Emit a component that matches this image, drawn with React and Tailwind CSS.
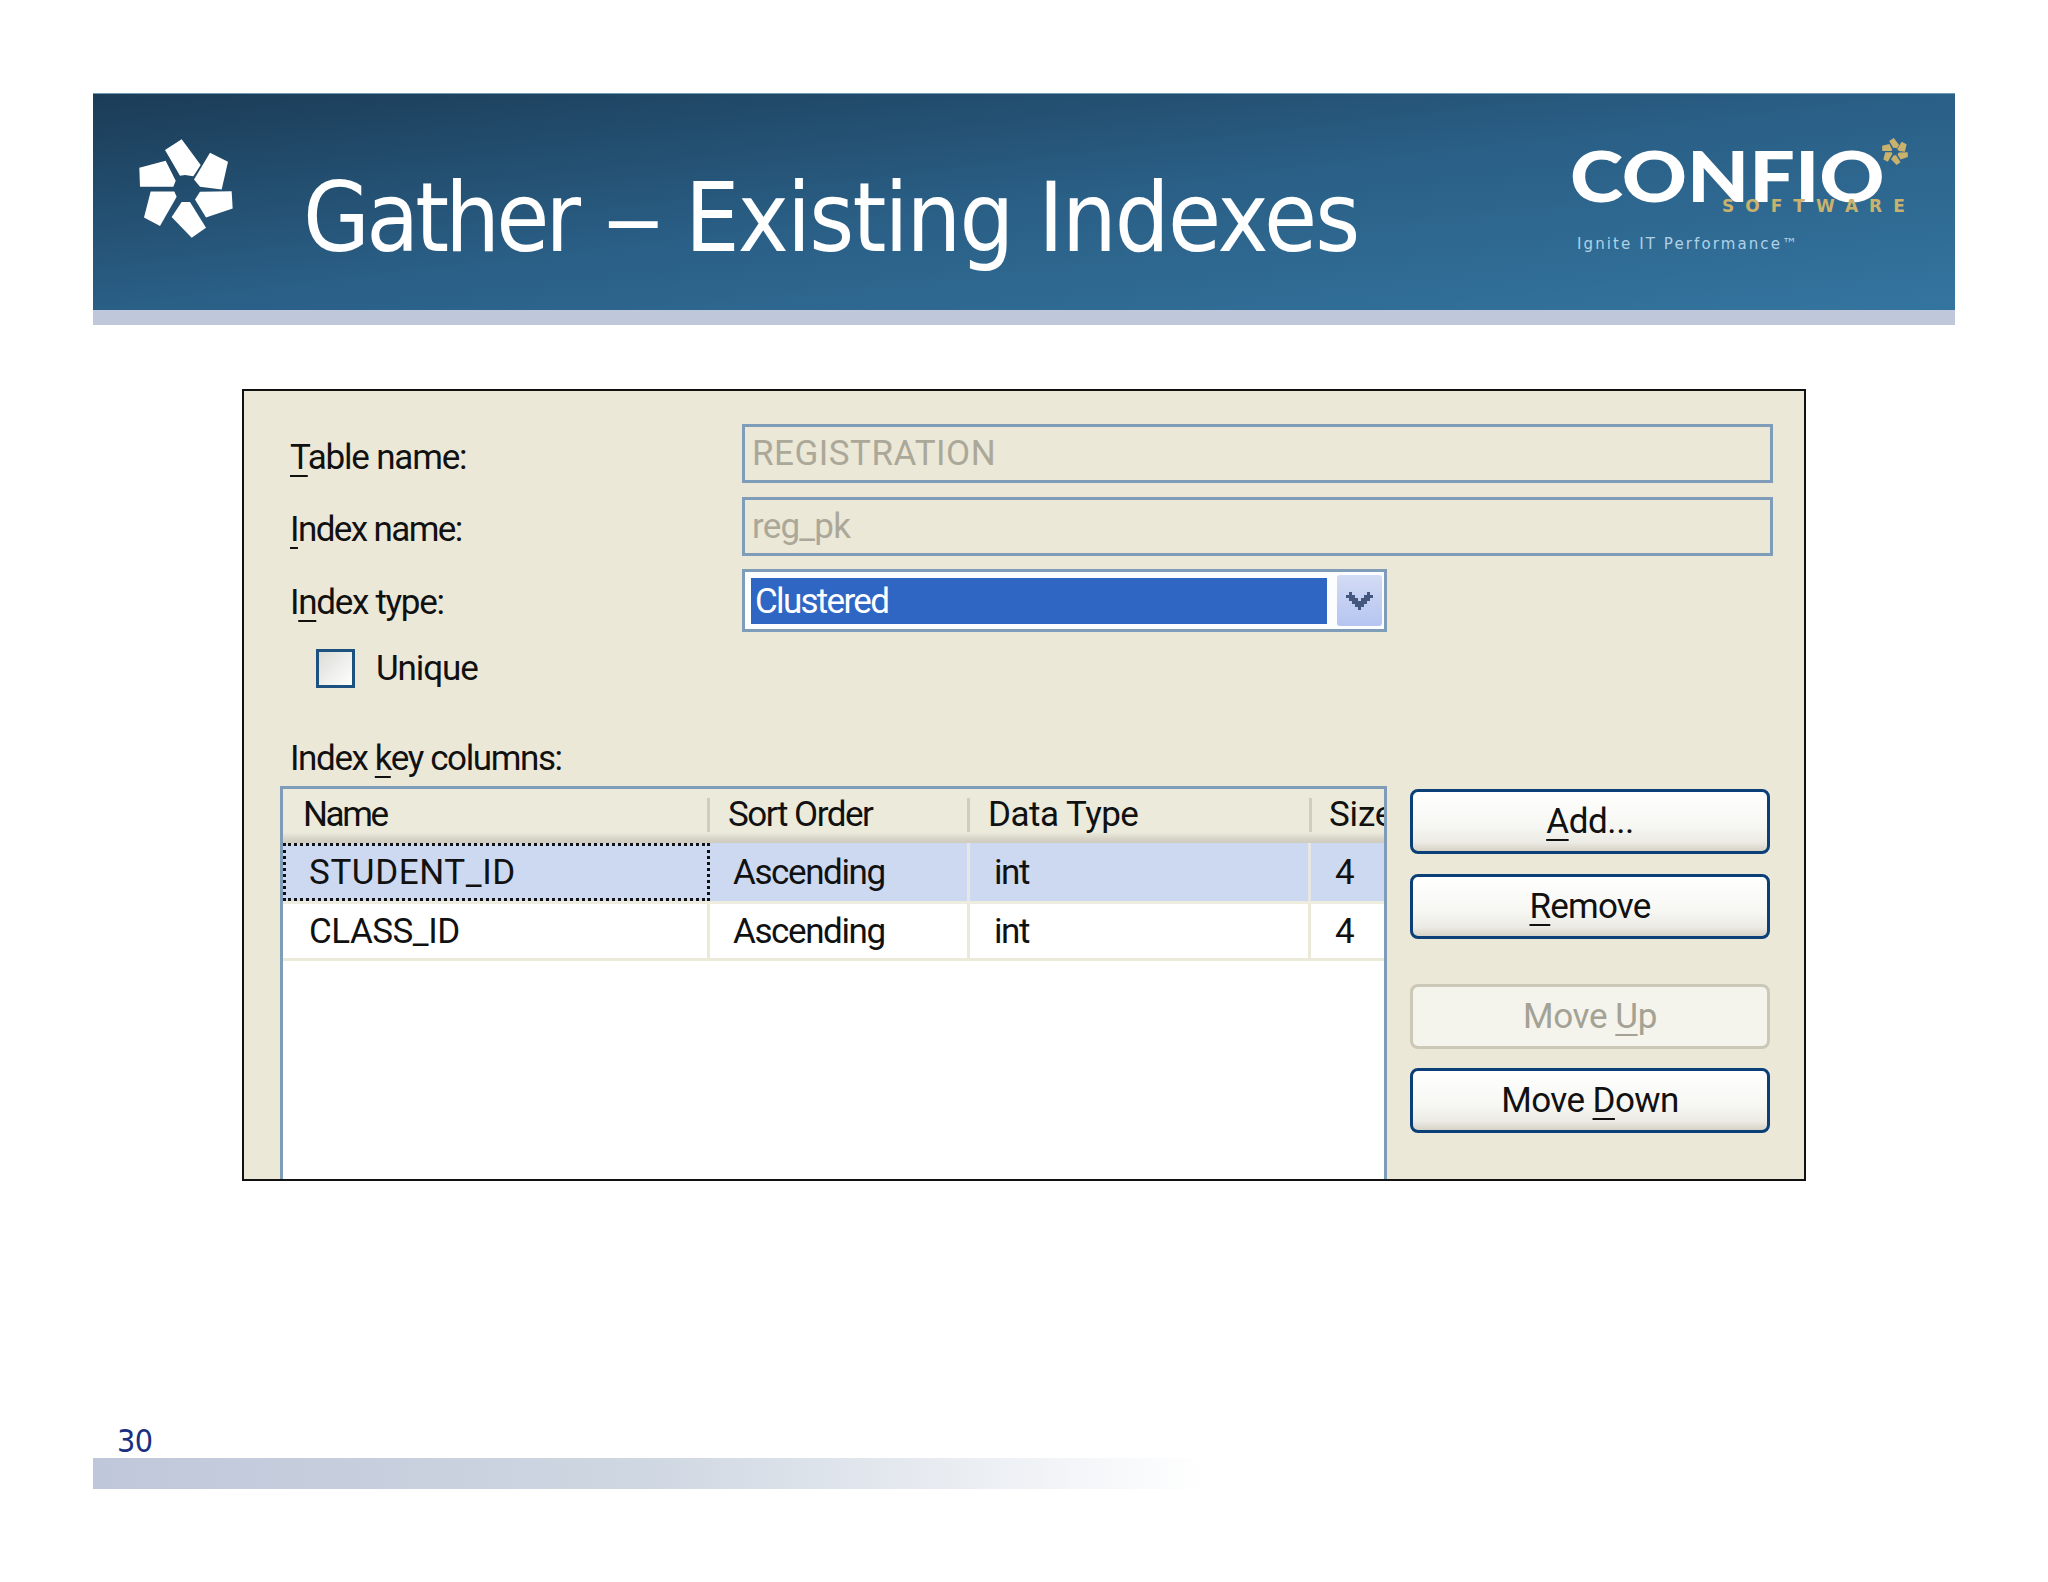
import React from 'react';

const ui = "font-['Roboto',Arial,sans-serif] text-[35px] leading-none text-[#111] font-normal";

const Petals = ({ className, fill }) => (
  <svg viewBox="27 27 282 296" preserveAspectRatio="none" className={className} fill={fill}>
    <polygon points="105,60 155,28 212,105 190,138 165,135 150,137" />
    <polygon points="240,68 294,95 275,178 210,170 192,148" />
    <polygon points="28,113 107,92 137,152 130,170 30,170" />
    <polygon points="62,184 133,184 140,200 90,287 42,262" />
    <polygon points="155,215 180,215 228,292 185,322 125,260" />
    <polygon points="195,208 210,185 305,183 308,235 228,262" />
  </svg>
);

const Mn = ({ children }) => (
  <span className="underline decoration-2 underline-offset-[6px]">{children}</span>
);

const FieldLabel = ({ children, className = '' }) => (
  <div className={`flex items-center ${ui} ${className}`}>{children}</div>
);

const ReadOnly = ({ children, tracking, height }) => (
  <div className={`flex items-center border-[3px] border-[#7f9db9] pl-[7px] text-[#aca899] ${height} ${tracking} font-['Roboto',Arial,sans-serif] text-[35px] leading-none`}>
    {children}
  </div>
);

const Button = ({ children, disabled, className = '' }) => (
  <button
    className={`flex h-[65px] w-[360px] items-center justify-center rounded-[8px] border-[3px] ${ui} ${
      disabled
        ? 'border-[#cbc8b8] bg-[#f4f3ec] !text-[#a3a294]'
        : 'border-[#0a3f78] bg-[linear-gradient(180deg,#ffffff_0%,#f6f6f2_60%,#ecebe5_85%,#d6d2c6_100%)]'
    } ${className}`}
  >
    {children}
  </button>
);

const HeadCell = ({ w, pl, tracking, sep = true, children }) => (
  <div className={`flex shrink-0 items-center justify-between ${w}`}>
    <span className={`${pl} ${tracking} whitespace-nowrap`}>{children}</span>
    {sep && <i className="h-[34px] w-[3px] shrink-0 bg-[#cfcdbe]" />}
  </div>
);

const Cell = ({ w, pl, line = 'border-r-[3px] border-r-[#e6e7e4]', tracking = 'tracking-[-1.4px]', children }) => (
  <div className={`flex shrink-0 items-center whitespace-nowrap ${w} ${pl} ${line} ${tracking}`}>{children}</div>
);

export default function App() {
  return (
    <div className="flex h-[1582px] w-[2048px] flex-col overflow-hidden bg-white px-[93px] pb-[93px] pt-[93px]">
      {/* Title banner */}
      <header className="shrink-0">
        <div className="flex h-[217px] items-start border-t border-[#6f9ab3] bg-linear-to-br from-[#1b3c57] via-[#2a5f86] to-[#34759f]">
          <Petals className="ml-[46px] mt-[45px] h-[99px] w-[94px] shrink-0" fill="#ffffff" />
          <h1 className="ml-[70px] mt-[64px] whitespace-nowrap font-['DejaVu_Sans',Verdana,sans-serif] text-[96px] font-normal leading-[120px] tracking-[-1.8px] text-white font-stretch-condensed">
            <span className="tracking-[-3.8px]">Gather</span>{' '}
            <span className="mr-[15px] inline-block origin-left scale-x-[1.4]">–</span>{' '}
            Existing Indexes
          </h1>
          <div className="relative ml-auto mr-[47px] mt-[44px] h-[114px] w-[336px] shrink-0">
            <span className="absolute -left-[2px] top-[2px] origin-left scale-x-[1.15] font-['Lato',sans-serif] text-[70px] font-black leading-[70px] text-white">
              CONFIO
            </span>
            <Petals className="absolute left-[310px] top-0 h-[27px] w-[26px]" fill="#c9b26e" />
            <span className="absolute left-[150px] top-[58px] font-['DejaVu_Sans',sans-serif] text-[17px] font-bold leading-[20px] tracking-[11px] text-[#c9b26e]">
              SOFTWARE
            </span>
            <span className="absolute left-[5px] top-[97px] whitespace-nowrap font-['DejaVu_Sans',sans-serif] text-[15px] leading-[18px] tracking-[2.1px] text-[#b0d2e6]">
              Ignite IT Performance™
            </span>
          </div>
        </div>
        <div className="h-[15px] bg-[#bfc7da]" />
      </header>

      {/* Screenshot of the index dialog */}
      <section className="ml-[149px] mt-[64px] flex h-[792px] w-[1564px] shrink-0 flex-col overflow-hidden border-2 border-[#111] bg-[#ebe8d8]">
        <div className="grid grid-cols-[452px_1fr] pl-[46px] pr-[31px] pt-[33px]">
          <FieldLabel className="h-[59px] pt-[8px] tracking-[-1.2px]">
            <span><Mn>T</Mn>able name:</span>
          </FieldLabel>
          <ReadOnly height="h-[59px]" tracking="tracking-[0.5px]">REGISTRATION</ReadOnly>

          <FieldLabel className="mt-[14px] h-[59px] pt-[6px] tracking-[-1.6px]">
            <span><Mn>I</Mn>ndex name:</span>
          </FieldLabel>
          <div className="mt-[14px]">
            <ReadOnly height="h-[59px]" tracking="tracking-[-0.8px]">reg_pk</ReadOnly>
          </div>

          <FieldLabel className="mt-[13px] h-[63px] pt-[4px] tracking-[-1.3px]">
            <span>I<Mn>n</Mn>dex type:</span>
          </FieldLabel>
          <div className="mt-[13px] flex h-[63px] w-[645px] items-center border-[3px] border-[#7f9db9] bg-[#fbfdff] pl-[6px] pr-[2px]">
            <div className={`flex h-[46px] w-[576px] items-center bg-[#2f66c4] pl-[4px] pt-[2px] ${ui} !text-white tracking-[-1.7px]`}>
              Clustered
            </div>
            <div className="ml-auto flex h-[51px] w-[45px] items-center justify-center rounded-[3px] bg-linear-to-b from-[#d3dcf4] to-[#b5c5f0]">
              <svg width="27" height="18" viewBox="0 0 27 18" fill="#44587f" shapeRendering="crispEdges">
                <path d="M3 0h3v3h3v3h3v3h3V6h3V3h3V0h3v3h3v3h-3v3h-3v3h-3v3h-3v3h-3v-3H9v-3H6V9H3V6H0V3h3z" />
              </svg>
            </div>
          </div>
        </div>

        <div className={`ml-[72px] mt-[17px] flex items-center ${ui} tracking-[-1.1px]`}>
          <div className="h-[39px] w-[39px] border-[3px] border-[#1c5180] bg-linear-to-br from-[#dcdcd7] to-white" />
          <span className="ml-[21px]">Unique</span>
        </div>

        <div className={`ml-[46px] mt-[53px] ${ui} tracking-[-1.4px]`}>
          Index <Mn>k</Mn>ey columns:
        </div>

        <div className="ml-[36px] mt-[10px] flex min-h-0 flex-1 items-start">
          <div className={`h-[500px] w-[1107px] shrink-0 overflow-hidden border-x-[3px] border-t-[3px] border-[#7f9db9] bg-white ${ui}`}>
            <div className="flex h-[54px] bg-[linear-gradient(180deg,#ebeadb_0%,#ebeadb_80%,#d5d2c5_94%,#cfccbe_100%)] pb-[3px]">
              <HeadCell w="w-[427px]" pl="pl-[20px]" tracking="tracking-[-2.4px]">Name</HeadCell>
              <HeadCell w="w-[260px]" pl="pl-[18px]" tracking="tracking-[-1.5px]">Sort Order</HeadCell>
              <HeadCell w="w-[342px]" pl="pl-[18px]" tracking="tracking-[-0.5px]">Data Type</HeadCell>
              <HeadCell w="w-[73px]" pl="pl-[17px]" tracking="tracking-[-0.2px]" sep={false}>Size</HeadCell>
            </div>

            <div className="flex h-[61px] overflow-hidden border-b-[3px] border-b-[#eeecdf] bg-[#cdd9f0]">
              <div className="flex w-[427px] shrink-0 items-center whitespace-nowrap border-[3px] border-dotted border-[#111] pl-[23px] tracking-[0.6px]">
                STUDENT_ID
              </div>
              <Cell w="w-[260px]" pl="pl-[23px]">Ascending</Cell>
              <Cell w="w-[341px]" pl="pl-[24px]">int</Cell>
              <Cell w="w-[73px]" pl="pl-[24px]" line="">4</Cell>
            </div>

            <div className="flex h-[57px] border-b-[3px] border-b-[#ebe9d8]">
              <div className="flex w-[427px] shrink-0 items-center whitespace-nowrap border-r-[3px] border-r-[#ebe9d8] pl-[26px] tracking-[-0.5px]">
                CLASS_ID
              </div>
              <Cell w="w-[260px]" pl="pl-[23px]" line="border-r-[3px] border-r-[#ebe9d8]">Ascending</Cell>
              <Cell w="w-[341px]" pl="pl-[24px]" line="border-r-[3px] border-r-[#ebe9d8]">int</Cell>
              <Cell w="w-[73px]" pl="pl-[24px]" line="">4</Cell>
            </div>
          </div>

          <div className="ml-[23px] mt-[3px] flex flex-col">
            <Button className="tracking-[-0.4px]"><span><Mn>A</Mn>dd...</span></Button>
            <Button className="mt-[20px] tracking-[-0.8px]"><span><Mn>R</Mn>emove</span></Button>
            <Button disabled className="mt-[45px] tracking-[-0.4px]"><span>Move <Mn>U</Mn>p</span></Button>
            <Button className="mt-[19px] tracking-[-0.6px]"><span>Move <Mn>D</Mn>own</span></Button>
          </div>
        </div>
      </section>

      {/* Slide footer */}
      <footer className="mt-auto">
        <div className="pl-[24px] font-['DejaVu_Sans',Verdana,sans-serif] text-[32px] leading-[32px] tracking-[-0.5px] text-[#1a2f80] font-stretch-condensed">
          30
        </div>
        <div className="mt-[1px] h-[31px] w-[1114px] bg-linear-to-r from-[#bfc7da] via-[#cfd7e2] to-white" />
      </footer>
    </div>
  );
}
